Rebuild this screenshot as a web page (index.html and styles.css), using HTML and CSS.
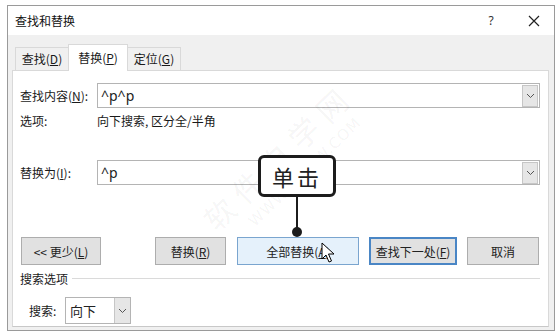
FILE: index.html
```html
<!DOCTYPE html>
<html>
<head>
<meta charset="utf-8">
<link rel="stylesheet" href="styles.css">
</head>
<body>
<div class="page">
  <div class="dialog">
    <div class="titlebar">
      <span class="title">查找和替换</span>
      <span class="help">?</span>
      <span class="close"><svg width="12" height="12" viewBox="0 0 12 12"><path d="M1 1 L11 11 M11 1 L1 11" stroke="#222" stroke-width="1.2" fill="none"/></svg></span>
    </div>
    <div class="body">
      <div class="tabs">
        <div class="tab">查找(<u>D</u>)</div>
        <div class="tab active">替换(<u>P</u>)</div>
        <div class="tab">定位(<u>G</u>)</div>
      </div>
      <div class="panel">
        <div class="row find">
          <span class="label">查找内容(<u>N</u>):</span>
          <div class="combo"><span class="value">^p^p</span><span class="drop"><svg width="9" height="6" viewBox="0 0 9 6"><path d="M1 1 L4.5 4.5 L8 1" stroke="#555" stroke-width="1" fill="none"/></svg></span></div>
        </div>
        <div class="row opts">
          <span class="label">选项:</span>
          <span>向下搜索, 区分全/半角</span>
        </div>
        <div class="row replace">
          <span class="label">替换为(<u>I</u>):</span>
          <div class="combo"><span class="value">^p</span><span class="drop"><svg width="9" height="6" viewBox="0 0 9 6"><path d="M1 1 L4.5 4.5 L8 1" stroke="#555" stroke-width="1" fill="none"/></svg></span></div>
        </div>
        <div class="buttons">
          <div class="btn less">&lt;&lt; 更少(<u>L</u>)</div>
          <div class="btn rep">替换(<u>R</u>)</div>
          <div class="btn all">全部替换(<u>A</u>)</div>
          <div class="btn next">查找下一处(<u>F</u>)</div>
          <div class="btn cancel">取消</div>
        </div>
        <div class="section"><span>搜索选项</span><span class="rule"></span></div>
        <div class="search">
          <span class="slabel">搜索:</span>
          <div class="select"><span class="value">向下</span><span class="drop"><svg width="9" height="6" viewBox="0 0 9 6"><path d="M1 1 L4.5 4.5 L8 1" stroke="#555" stroke-width="1" fill="none"/></svg></span></div>
        </div>
      </div>
    </div>
  </div>

  <div class="watermark main">软件自学网</div>
  <div class="watermark sub">WWW.RJZXW.COM</div>

  <div class="callout">单击</div>
  <div class="callout-line"></div>
  <div class="callout-dot"></div>

  <svg class="cursor" width="14" height="21" viewBox="0 0 14 21"><path d="M1 1 L1 17 L5 13 L8 20 L10.5 19 L7.5 12 L13 12 Z" fill="#fff" stroke="#000" stroke-width="1" stroke-linejoin="round"/></svg>
</div>
</body>
</html>
```
FILE: styles.css
```css
* { box-sizing: border-box; }
html, body { margin: 0; padding: 0; background: #fff; }
body {
  font-family: "Noto Sans CJK SC", "Noto Sans", sans-serif;
  font-size: 12px;
  color: #1a1a1a;
}
u { text-decoration: underline; text-underline-offset: 1px; }
.page { position: relative; width: 560px; height: 335px; overflow: hidden; }

.dialog {
  margin: 5px 0 0 7px;
  width: 548px;
  height: 326px;
  border: 1px solid #9a9a9a;
  display: flex;
  flex-direction: column;
  background: #fff;
}
.titlebar {
  height: 29px;
  display: flex;
  align-items: center;
  padding-left: 7px;
  background: #fff;
}
.title { flex: 1; font-size: 12px; color: #111; }
.help { width: 14px; text-align: center; margin-right: 30px; font-family: "Noto Sans", sans-serif; font-size: 12px; color: #333; }
.close { display: flex; width: 12px; margin-right: 14px; }

.body {
  flex: 1;
  background: #f0f0f0;
  padding: 0 5px 3px 4px;
  display: flex;
  flex-direction: column;
}
.tabs {
  margin-top: 9px;
  height: 26px;
  display: flex;
  align-items: flex-end;
  padding-left: 3px;
}
.tab {
  height: 23px;
  width: 54px;
  white-space: nowrap;
  display: block;
  line-height: 22px;
  text-align: center;
  border: 1px solid #d9d9d9;
  border-bottom: none;
  background: #f0f0f0;
  margin-right: -1px;
  flex: none;
}
.tab.active {
  height: 27px;
  width: 60px;
  line-height: 26px;
  background: #fff;
  position: relative;
  margin-bottom: -1px;
  z-index: 1;
}

.panel {
  flex: 1;
  background: #fff;
  border: 1px solid #d9d9d9;
  border-bottom-color: #c8c8c8;
  padding: 0 8px 0 0;
  display: flex;
  flex-direction: column;
}
.row { display: flex; align-items: center; }
.label { width: 84px; padding-left: 7px; flex: none; white-space: nowrap; }
.find { margin-top: 12px; height: 25px; }
.opts { margin-top: 4px; height: 16px; }
.replace { margin-top: 32px; height: 25px; }
.combo {
  flex: 1;
  height: 25px;
  border: 1px solid #b4b4b4;
  display: flex;
  align-items: center;
  padding: 0 1px 0 3px;
}
.combo .value, .select .value {
  flex: 1;
  font-family: "Noto Sans", sans-serif;
  font-size: 14px;
  color: #222;
}
.combo .drop {
  width: 16px;
  height: 22px;
  background: #e6e6e6;
  border: 1px solid #c6c6c6;
  display: flex;
  align-items: center;
  justify-content: center;
}

.buttons {
  margin-top: 52px;
  height: 28px;
  display: flex;
  padding-left: 8px;
}
.btn {
  height: 28px;
  border: 1px solid #adadad;
  background: #e1e1e1;
  display: flex;
  align-items: center;
  justify-content: center;
  color: #222;
  white-space: nowrap;
}
.less { width: 80px; }
.rep { width: 71px; margin-left: 54px; }
.all { width: 122px; margin-left: 11px; background: #e5f1fb; border-color: #7aa5cf; }
.next { width: 88px; margin-left: 10px; border: 2px solid #4a86c5; }
.cancel { width: 72px; margin-left: 10px; }

.section {
  margin-top: 5px;
  height: 16px;
  display: flex;
  align-items: center;
  padding-left: 7px;
}
.section .rule { flex: 1; height: 1px; background: #dadada; margin-left: 4px; }

.search {
  margin-top: 11px;
  height: 27px;
  display: flex;
  align-items: center;
  padding-left: 16px;
}
.slabel { width: 36px; }
.select {
  width: 66px;
  height: 27px;
  border: 1px solid #b4b4b4;
  display: flex;
  align-items: center;
  padding-left: 4px;
}
.select .value { font-family: "Noto Sans CJK SC", sans-serif; font-size: 13px; }
.select .drop {
  width: 16px;
  height: 25px;
  background: #e6e6e6;
  border-left: 1px solid #c6c6c6;
  display: flex;
  align-items: center;
  justify-content: center;
}

.watermark {
  position: absolute;
  color: rgba(0,0,0,0.055);
  white-space: nowrap;
  transform-origin: center;
  pointer-events: none;
}
.watermark.main {
  left: 178px; top: 134px;
  width: 200px; text-align: center;
  font-size: 30px; letter-spacing: 9px;
  transform: rotate(-44deg);
}
.watermark.sub {
  left: 220px; top: 163px;
  width: 170px; text-align: center;
  font-family: "DejaVu Sans", sans-serif;
  font-size: 15px; letter-spacing: 1px;
  transform: rotate(-44deg);
}

.callout {
  position: absolute;
  left: 258px; top: 155px;
  width: 78px; height: 42px;
  border: 3px solid #1c1c1c;
  border-radius: 6px;
  background: #fff;
  font-size: 22px;
  letter-spacing: 3px;
  color: #222;
  display: flex;
  align-items: center;
  justify-content: center;
}
.callout-line {
  position: absolute;
  left: 296px; top: 196px;
  width: 2px; height: 34px;
  background: #1c1c1c;
}
.callout-dot {
  position: absolute;
  left: 292px; top: 227px;
  width: 10px; height: 10px;
  border-radius: 50%;
  background: #1c1c1c;
}
.cursor { position: absolute; left: 321px; top: 242px; }
```
